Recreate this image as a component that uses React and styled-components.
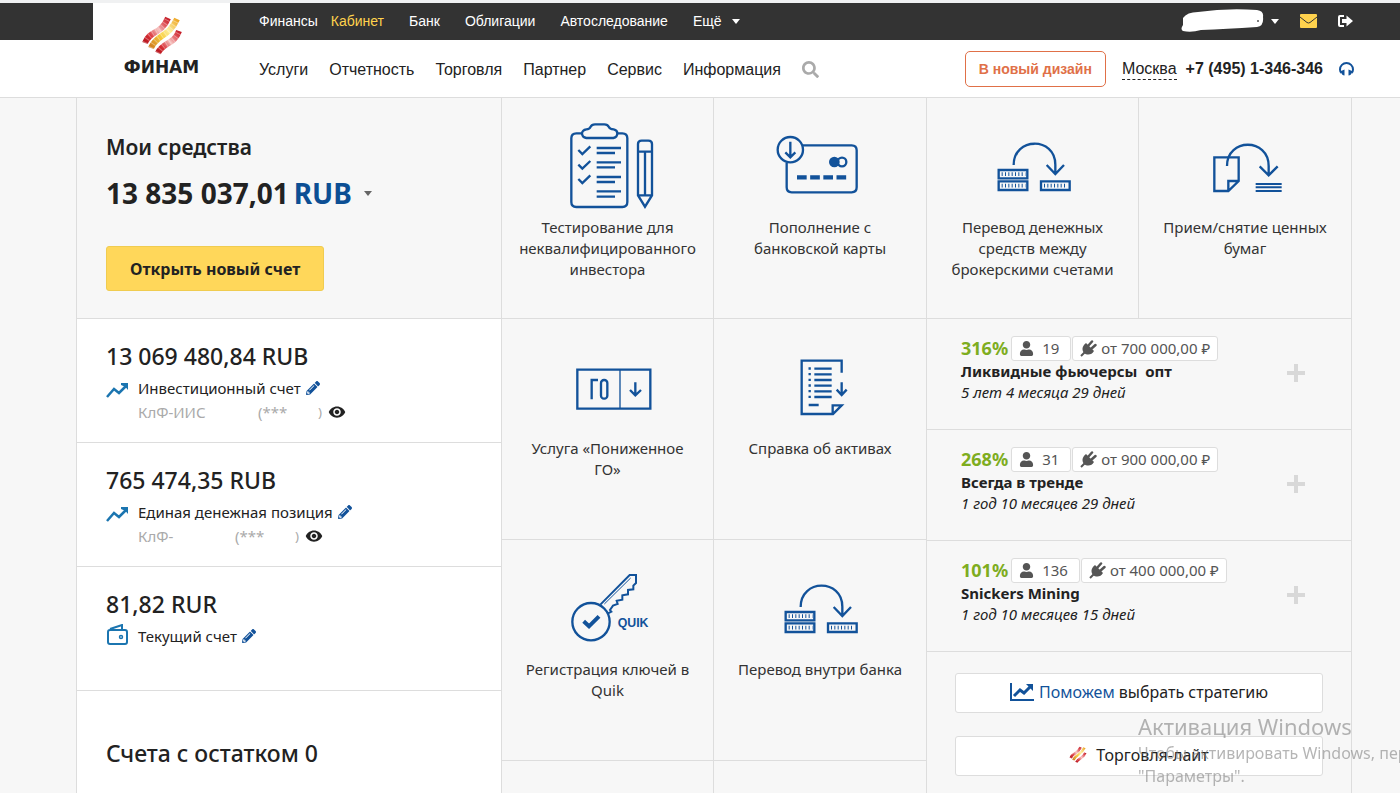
import React from 'react'
import styled, { createGlobalStyle } from 'styled-components'
import { FaPencilAlt, FaUser, FaSearch } from 'react-icons/fa'
import { MdVisibility } from 'react-icons/md'

const GlobalStyle = createGlobalStyle`
    * {
        box-sizing: border-box;
    }
    body {
        margin: 0;
        background: #f7f7f7;
        color: #222;
        font-family: 'Noto Sans', 'Open Sans', sans-serif;
        font-size: 15px;
        line-height: 21px;
    }
    a {
        color: inherit;
        text-decoration: none;
    }
    button {
        font-family: inherit;
        cursor: pointer;
    }
`

const Page = styled.div`
    display: flex;
    flex-direction: column;
    height: 100vh;
    overflow: hidden;
`

/* ---------- header ---------- */

const Header = styled.header`
    display: grid;
    grid-template-columns: 93px 137px 1fr;
    grid-template-rows: 37px 57px;
    flex: none;
    border-top: 3px solid #f0f1f2;
    border-bottom: 1px solid #ddd;
    background: #fff;
    font-family: 'Liberation Sans', Arial, sans-serif;
`

const TopBar = styled.div`
    grid-area: 1 / 1 / 2 / 4;
    display: flex;
    align-items: center;
    justify-content: space-between;
    padding: 0 47px 1px 259px;
    background: #333;
    color: #fff;
`

const Logo = styled.a`
    grid-area: 1 / 2 / 3 / 3;
    display: flex;
    flex-direction: column;
    align-items: center;
    padding-top: 12px;
    background: #fff;
`

const LogoName = styled.span`
    font: bold 17px/20px 'DejaVu Sans', sans-serif;
    color: #222;
`

const TopNav = styled.nav`
    display: flex;
    gap: 25px;
    font-size: 14px;
`

const TopGroup = styled.div`
    display: flex;
    gap: 13px;
`

const TopLink = styled.a`
    color: ${props => (props.$active ? '#ffd24d' : '#fff')};
`

const MoreButton = styled.button`
    display: flex;
    align-items: center;
    gap: 10px;
    padding: 0;
    border: none;
    background: none;
    color: inherit;
    font-size: inherit;
`

const Caret = styled.span`
    border: 4px solid transparent;
    border-top: 5px solid ${props => props.$color || '#fff'};
    border-bottom: 0;
`

const UserTools = styled.div`
    display: flex;
    align-items: center;
    gap: 21px;
`

const IconButton = styled.button`
    display: inline-flex;
    align-items: center;
    gap: 6px;
    padding: 0;
    border: none;
    background: none;
    color: ${props => props.$color || 'inherit'};
`

const MainBar = styled.div`
    grid-area: 2 / 3 / 3 / 4;
    display: flex;
    align-items: center;
    justify-content: space-between;
    padding: 1px 46px 0 29px;
    font-size: 16px;
`

const MainNav = styled.nav`
    display: flex;
    align-items: center;
    gap: 21px;
`

const Contacts = styled.div`
    display: flex;
    align-items: center;
    gap: 16px;
    white-space: nowrap;
`

const DesignButton = styled.button`
    height: 36px;
    padding: 0 13px;
    border: 1px solid #e07048;
    border-radius: 5px;
    background: #fff;
    color: #e07048;
    font-size: 14px;
    font-weight: bold;
`

const Phone = styled.div`
    display: flex;
    gap: 9px;
    font-weight: bold;
`

const City = styled.a`
    border-bottom: 1px dashed #222;
    font-weight: normal;
`

/* ---------- columns ---------- */

const Columns = styled.main`
    display: grid;
    grid-template-columns: repeat(3, 1fr);
    flex: 1;
    min-height: 0;
    margin: 0 48px 0 76px;
    border-left: 1px solid #ddd;
`

const Column = styled.section`
    display: flex;
    flex-direction: column;
    border-right: 1px solid #ddd;
    background: ${props => (props.$white ? '#fff' : 'transparent')};
`

const Summary = styled.div`
    padding: 34px 29px 27px;
    border-bottom: 1px solid #ddd;
    background: #f7f7f7;
`

const SummaryTitle = styled.h2`
    margin: 0;
    font-size: 21px;
    line-height: 30px;
    font-weight: 600;
`

const Total = styled.div`
    display: flex;
    align-items: center;
    gap: 5px;
    margin: 12px 0 34px;
    font-size: 28px;
    line-height: 38px;
    font-weight: 700;
`

const Currency = styled.button`
    display: flex;
    align-items: center;
    gap: 12px;
    padding: 0;
    border: none;
    background: none;
    color: #0c4f94;
    font-size: inherit;
    font-weight: inherit;
    line-height: inherit;
`

const OpenButton = styled.button`
    height: 45px;
    padding: 0 23px;
    border: 1px solid #f0cc50;
    border-radius: 3px;
    background: #ffd75a;
    color: #222;
    font-size: 16px;
    font-weight: 700;
`

const Account = styled.article`
    min-height: 124px;
    padding: 21px 29px 16px;
    border-bottom: 1px solid #ddd;
`

const Amount = styled.h3`
    margin: 0;
    font-size: 23px;
    line-height: 32px;
    font-weight: 500;
`

const AccountRow = styled.div`
    display: flex;
    align-items: center;
    gap: 5px;
    margin-top: 4px;
    line-height: 24px;
`

const AccountIcon = styled.span`
    display: flex;
    width: 27px;
`

const AccountCode = styled.div`
    display: flex;
    align-items: center;
    padding-left: 32px;
    color: #aaa;
    line-height: 24px;
`

const CodeStart = styled.span`
    width: ${props => props.$width}px;
`

const CodeMask = styled.span`
    width: 60px;
`

const EmptyAccounts = styled.h3`
    margin: 0;
    padding: 46px 29px;
    font-size: 23px;
    line-height: 32px;
    font-weight: 500;
`

/* ---------- tiles ---------- */

const Tiles = styled.div`
    display: grid;
    grid-template-columns: repeat(2, 1fr);
    grid-auto-rows: minmax(221px, auto);
    flex: 1;
`

const TopTiles = styled(Tiles)`
    flex: none;
`

const Tile = styled.a`
    display: flex;
    flex-direction: column;
    align-items: center;
    gap: 8px;
    padding: 25px 16px 20px;
    border-bottom: 1px solid #ddd;
    color: #333;
    text-align: center;
    &:nth-child(odd) {
        border-right: 1px solid #ddd;
    }
`

const TileArt = styled.svg`
    flex: none;
    width: 96px;
    height: 86px;
    fill: none;
    stroke: #12529a;
    stroke-width: 7;
`

const QuikText = styled.text`
    font: bold 37px 'Liberation Sans', Arial, sans-serif;
    fill: #12529a;
    stroke: none;
`

/* ---------- strategies ---------- */

const Strategy = styled.article`
    display: flex;
    align-items: center;
    justify-content: space-between;
    min-height: 111px;
    padding: 17px 46px 19px 34px;
    border-bottom: 1px solid #ddd;
`

const StrategyInfo = styled.div`
    align-self: flex-start;
`

const StrategyHead = styled.div`
    display: flex;
    align-items: center;
    gap: 1px;
`

const Percent = styled.span`
    margin-right: 2px;
    color: #7ead1f;
    font-size: 18px;
    font-weight: 700;
`

const Badge = styled.span`
    display: flex;
    align-items: center;
    gap: 4px;
    height: 25px;
    padding: 0 7px;
    border: 1px solid #ddd;
    border-radius: 3px;
    background: #fff;
    color: #555;
`

const Subscribers = styled(Badge)`
    gap: 8px;
    padding: 0 11px 0 7px;
`

const StrategyName = styled.div`
    font-weight: 700;
    white-space: pre;
`

const StrategyAge = styled.div`
    font-style: italic;
`

const Actions = styled.div`
    display: flex;
    flex-direction: column;
    gap: 23px;
    padding: 21px 28px;
`

const ActionButton = styled.button`
    display: flex;
    align-items: center;
    justify-content: center;
    gap: ${props => props.$gap}px;
    height: 40px;
    padding-bottom: 4px;
    border: 1px solid #ddd;
    border-radius: 3px;
    background: #fff;
    color: #222;
    font-size: 16px;
`

const Accent = styled.span`
    color: #12529a;
`

const Watermark = styled.aside`
    position: fixed;
    right: 0;
    bottom: 5px;
    width: 262px;
    overflow: hidden;
    color: rgba(120, 120, 120, .55);
    font-size: 16px;
    line-height: 23px;
    white-space: nowrap;
    pointer-events: none;
`

const WatermarkTitle = styled.div`
    font-size: 22px;
    line-height: 32px;
`

/* ---------- drawings ---------- */

const Ribbons = ({ size }) => (
    <svg width={size} height={size} viewBox="0 0 42 42" fill="none">
        <defs>
            <linearGradient id={`red${size}`} x1="0" y1="1" x2="1" y2="0">
                <stop offset="0" stopColor="#b5121b" />
                <stop offset=".25" stopColor="#d93036" />
                <stop offset=".55" stopColor="#f6c3c0" />
                <stop offset=".8" stopColor="#e0545a" />
                <stop offset="1" stopColor="#c41c26" />
            </linearGradient>
            <linearGradient id={`gold${size}`} x1="0" y1="1" x2="1" y2="0">
                <stop offset="0" stopColor="#cf7a1c" />
                <stop offset=".4" stopColor="#f8cf3e" />
                <stop offset=".65" stopColor="#fdf0a0" />
                <stop offset="1" stopColor="#eda520" />
            </linearGradient>
        </defs>
        <g strokeWidth="6">
            <path d="M4 28C9 15 20 20 27 3" stroke={`url(#red${size})`} />
            <path d="M10 33C15 20 28 22 36 4" stroke={`url(#gold${size})`} />
            <path d="M17 38C22 27 33 30 38 16" stroke={`url(#red${size})`} />
        </g>
        <g strokeWidth="6" stroke="#fff" strokeOpacity=".35" strokeDasharray="1 3">
            <path d="M4 28C9 15 20 20 27 3" />
            <path d="M10 33C15 20 28 22 36 4" />
            <path d="M17 38C22 27 33 30 38 16" />
        </g>
    </svg>
)

const HiddenName = () => (
    <svg width="84" height="24" viewBox="0 0 84 24">
        <path d="M2 9Q6 3 17 3Q45 -1 76 1Q83 2 82 8Q83 17 76 18Q45 20 20 21Q10 24 2 22Q-1 20 2 16Z" fill="#fff" />
        <circle cx="77" cy="12" r="1" fill="#555" />
    </svg>
)

const MailIcon = () => (
    <svg width="17" height="14" viewBox="0 0 17 14">
        <rect width="17" height="14" rx="1" fill="#ffd24d" />
        <path d="M0 3L7 8.500Q8.500 9.500 10 8.500L17 3" fill="none" stroke="#333" />
    </svg>
)

const ExitIcon = () => (
    <svg width="15" height="14" viewBox="0 0 15 14">
        <path d="M6 2H2Q1 2 1 3V11Q1 12 2 12H6" fill="none" stroke="#fff" strokeWidth="2" />
        <path d="M4 5H8.500V1.500L15 7L8.500 12.500V9H4Z" fill="#fff" />
    </svg>
)

const HeadsetIcon = () => (
    <svg width="15" height="14" viewBox="0 0 15 14">
        <path d="M2.500 11Q1 10 1 7.500A6.500 6.500 0 0 1 14 7.500Q14 10 12.500 11" fill="none" stroke="#12529a" strokeWidth="2" />
        <path d="M2 9L5.500 7.500V13.500Q3 13.500 2 10ZM13 9L9.500 7.500V13.500Q12 13.500 13 10Z" fill="#12529a" />
    </svg>
)

const TrendIcon = () => (
    <svg width="23" height="20" viewBox="0 -4 23 20" fill="none" stroke="#1b75b0" strokeWidth="2.500">
        <path d="M1 15L8 7L13 11L20 4" />
        <path d="M15 1H22V8L19.500 5L15 3Z" fill="#1b75b0" stroke="none" />
    </svg>
)

const WalletIcon = () => (
    <svg width="22" height="24" viewBox="0 0 22 24" fill="none" stroke="#1b75b0" strokeWidth="2">
        <rect x="2" y="6" width="19" height="14" rx="2" />
        <path d="M4 5L16 1V5" />
        <circle cx="15" cy="13" r="1.500" strokeWidth="1.500" />
    </svg>
)

const PlugIcon = () => (
    <svg width="17" height="17" viewBox="0 0 17 17">
        <path d="M1 16L5 12" stroke="#555" strokeWidth="2" />
        <path d="M6 3L14 11C12 15 7 15.500 4 13C1.500 10 2 6 6 3Z" fill="#555" />
        <path d="M8 6L12 1.500M11 9L15.500 5" stroke="#555" strokeWidth="2.500" strokeLinecap="round" />
    </svg>
)

const PlusIcon = () => (
    <svg width="18" height="18" viewBox="0 0 18 18">
        <path d="M9 0V18M0 9H18" stroke="#d8d8d8" strokeWidth="4" />
    </svg>
)

const ChartIcon = () => (
    <svg width="24" height="20" viewBox="0 0 24 20" fill="none" stroke="#12529a">
        <path d="M1 1V18H24" strokeWidth="2" />
        <path d="M4 14L10 8L14 11L20 5" strokeWidth="3" />
        <path d="M16 2H23V9Z" fill="#12529a" stroke="none" />
    </svg>
)

const ChecklistArt = () => (
    <TileArt viewBox="179 75 288 258">
        <path d="M247 106H228Q213 106 213 121V312Q213 327 228 327H366Q381 327 381 312V121Q381 106 366 106H349" />
        <path d="M258 120Q245 118 245 106Q246 96 258 94Q268 94 271 86Q274 79 284 79H312Q322 79 325 86Q328 94 340 94Q351 96 351 106Q351 118 339 120Z" />
        <path d="M234 156L246 168L270 145M234 200L246 212L270 189M234 243L246 255L270 232" />
        <path d="M289 150H362M289 165H344M289 193H362M289 208H344M289 237H362M289 252H344M289 280H362M289 296H344" />
        <path d="M413 292V138Q413 128 424 128H444Q455 128 455 138V292L434 326ZM413 161H455M413 292H455M434 161V292" />
    </TileArt>
)

const CardArt = () => (
    <TileArt viewBox="814 75 288 258">
        <path d="M906 142H1053Q1068 142 1068 157V268Q1068 283 1053 283H873Q858 283 858 268V194" />
        <circle cx="869" cy="155" r="38" />
        <path d="M869 131V176M854 163L869 178L884 163" />
        <circle cx="1001" cy="192" r="16" fill="#12529a" stroke="none" />
        <circle cx="1024" cy="192" r="13" />
        <path d="M889 238H1037" strokeWidth="13" strokeDasharray="29 10.500" />
    </TileArt>
)

const TransferArt = () => (
    <TileArt viewBox="175 75 288 258">
        <path d="M261 201C261 116 386 116 386 200V228M360 201L386 228L412 201" />
        <path d="M216 216H302V241H216ZM216 250H302V276H216ZM343 250H429V276H343Z" />
        <path d="M225 228.500H296M225 263H296M352 263H422" strokeWidth="11" strokeDasharray="3 7" />
    </TileArt>
)

const PapersArt = () => (
    <TileArt viewBox="814 75 288 258">
        <path d="M904 204C904 119 1029 119 1029 204V232M1002 205L1029 232L1056 205" />
        <path d="M866 178H939V249L908 279H866ZM908 279V249H939" />
        <path d="M990 258H1068M990 268H1068M990 279H1068" strokeWidth="6" />
    </TileArt>
)

const MarginArt = () => (
    <TileArt viewBox="179 12 288 258">
        <path d="M231 89H450V206H231Z" />
        <path d="M359 89V206" strokeWidth="4" />
        <path d="M274 178V120H293" />
        <rect x="302" y="120" width="19" height="56" rx="9" />
        <path d="M405 127V166M389 150L405 166L422 150" />
    </TileArt>
)

const ReportArt = () => (
    <TileArt viewBox="814 12 288 258">
        <path d="M1023 98V62H903V222H997L1023 196H996V222" />
        <path d="M941 86H993M941 103H993M941 120H993M941 137H993M941 154H993M941 171H993M924 195H954" />
        <path d="M927 82V176" strokeDasharray="7 10" />
        <path d="M1023 127V164M1008 149L1023 165L1038 149" />
    </TileArt>
)

const KeyArt = () => (
    <TileArt viewBox="179 15 288 258">
        <circle cx="272" cy="185" r="56" />
        <path d="M300 134L388 45H407V69L399 77V88L383 90V103L366 106V119L349 122L352 132L338 137L329 150L333 155L323 160" strokeWidth="6" />
        <path d="M312 132L391 54" strokeWidth="3" />
        <path d="M250 184L266 199L296 169" strokeWidth="12" />
        <QuikText x="352" y="202">QUIK</QuikText>
    </TileArt>
)

/* ---------- data ---------- */

const mainLinks = ['Услуги', 'Отчетность', 'Торговля', 'Партнер', 'Сервис', 'Информация']

const accounts = [
    { amount: '13 069 480,84 RUB', name: 'Инвестиционный счет', Icon: TrendIcon, code: 'КлФ-ИИС', width: 120 },
    { amount: '765 474,35 RUB', name: 'Единая денежная позиция', Icon: TrendIcon, code: 'КлФ-', width: 97 },
    { amount: '81,82 RUR', name: 'Текущий счет', Icon: WalletIcon }
]

const tiles = [
    { title: 'Тестирование для неквалифицированного инвестора', Art: ChecklistArt },
    { title: 'Пополнение с банковской карты', Art: CardArt },
    { title: 'Услуга «Пониженное ГО»', Art: MarginArt },
    { title: 'Справка об активах', Art: ReportArt },
    { title: 'Регистрация ключей в Quik', Art: KeyArt },
    { title: 'Перевод внутри банка', Art: TransferArt }
]

const topTiles = [
    { title: 'Перевод денежных средств между брокерскими счетами', Art: TransferArt },
    { title: 'Прием/снятие ценных бумаг', Art: PapersArt }
]

const strategies = [
    { percent: '316%', users: 19, from: 'от 700 000,00 ₽', name: 'Ликвидные фьючерсы  опт', age: '5 лет 4 месяца 29 дней' },
    { percent: '268%', users: 31, from: 'от 900 000,00 ₽', name: 'Всегда в тренде', age: '1 год 10 месяцев 29 дней' },
    { percent: '101%', users: 136, from: 'от 400 000,00 ₽', name: 'Snickers Mining', age: '1 год 10 месяцев 15 дней' }
]

const renderTile = ({ title, Art }) => (
    <Tile href="#" key={title}>
        <Art />
        {title}
    </Tile>
)

const App = () => (
    <Page>
        <GlobalStyle />
        <Header>
            <TopBar>
                <TopNav>
                    <TopGroup>
                        <TopLink href="#">Финансы</TopLink>
                        <TopLink href="#" $active>Кабинет</TopLink>
                    </TopGroup>
                    <TopLink href="#">Банк</TopLink>
                    <TopLink href="#">Облигации</TopLink>
                    <TopLink href="#">Автоследование</TopLink>
                    <MoreButton>Ещё <Caret /></MoreButton>
                </TopNav>
                <UserTools>
                    <IconButton aria-label="Профиль"><HiddenName /><Caret /></IconButton>
                    <IconButton aria-label="Сообщения"><MailIcon /></IconButton>
                    <IconButton aria-label="Выход"><ExitIcon /></IconButton>
                </UserTools>
            </TopBar>
            <Logo href="#">
                <Ribbons size={42} />
                <LogoName>ФИНАМ</LogoName>
            </Logo>
            <MainBar>
                <MainNav>
                    {mainLinks.map(link => <a href="#" key={link}>{link}</a>)}
                    <IconButton aria-label="Поиск" $color="#aaa"><FaSearch size={17} /></IconButton>
                </MainNav>
                <Contacts>
                    <DesignButton>В новый дизайн</DesignButton>
                    <Phone><City href="#">Москва</City>+7 (495) 1-346-346</Phone>
                    <IconButton aria-label="Поддержка"><HeadsetIcon /></IconButton>
                </Contacts>
            </MainBar>
        </Header>

        <Columns>
            <Column $white>
                <Summary>
                    <SummaryTitle>Мои средства</SummaryTitle>
                    <Total>
                        13 835 037,01
                        <Currency>RUB <Caret $color="#666" /></Currency>
                    </Total>
                    <OpenButton>Открыть новый счет</OpenButton>
                </Summary>
                {accounts.map(({ amount, name, Icon, code, width }) => (
                    <Account key={name}>
                        <Amount>{amount}</Amount>
                        <AccountRow>
                            <AccountIcon><Icon /></AccountIcon>
                            {name}
                            <IconButton aria-label="Изменить" $color="#12529a"><FaPencilAlt size={14} /></IconButton>
                        </AccountRow>
                        {code && (
                            <AccountCode>
                                <CodeStart $width={width}>{code}</CodeStart>
                                <CodeMask>(***</CodeMask>
                                <IconButton aria-label="Показать"><span>)</span><MdVisibility size={18} color="#222" /></IconButton>
                            </AccountCode>
                        )}
                    </Account>
                ))}
                <EmptyAccounts>Счета с остатком 0</EmptyAccounts>
            </Column>

            <Column>
                <Tiles>
                    {tiles.map(renderTile)}
                    <Tile as="div" />
                    <Tile as="div" />
                </Tiles>
            </Column>

            <Column>
                <TopTiles>{topTiles.map(renderTile)}</TopTiles>
                {strategies.map(item => (
                    <Strategy key={item.name}>
                        <StrategyInfo>
                            <StrategyHead>
                                <Percent>{item.percent}</Percent>
                                <Subscribers><FaUser size={15} />{item.users}</Subscribers>
                                <Badge><PlugIcon />{item.from}</Badge>
                            </StrategyHead>
                            <StrategyName>{item.name}</StrategyName>
                            <StrategyAge>{item.age}</StrategyAge>
                        </StrategyInfo>
                        <IconButton aria-label="Подключить"><PlusIcon /></IconButton>
                    </Strategy>
                ))}
                <Actions>
                    <ActionButton $gap={5}>
                        <ChartIcon />
                        <span><Accent>Поможем</Accent> выбрать стратегию</span>
                    </ActionButton>
                    <ActionButton $gap={9}>
                        <Ribbons size={18} />
                        Торговля-лайт
                    </ActionButton>
                </Actions>
            </Column>
        </Columns>

        <Watermark>
            <WatermarkTitle>Активация Windows</WatermarkTitle>
            <div>Чтобы активировать Windows, перейдите в раздел</div>
            <div>"Параметры".</div>
        </Watermark>
    </Page>
)

export default App
